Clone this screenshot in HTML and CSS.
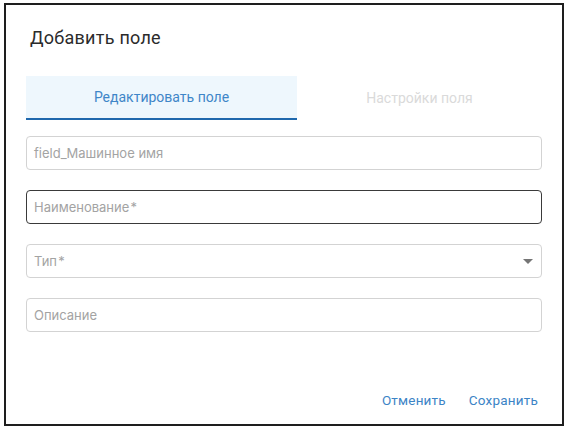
FILE: index.html
```html
<!DOCTYPE html>
<html lang="ru">
<head>
<meta charset="utf-8">
<link rel="stylesheet" href="styles.css">
</head>
<body>
<div class="frame">
  <h1 class="title">Добавить поле</h1>
  <div class="tabs">
    <div class="tab tab-active">Редактировать поле</div>
    <div class="tab tab-disabled">Настройки поля</div>
  </div>
  <div class="fields">
    <div class="field">field_Машинное имя</div>
    <div class="field field-focus">Наименование&#8202;*</div>
    <div class="field field-select"><span>Тип&#8202;*</span>
      <svg class="arrow" width="10" height="5" viewBox="0 0 10 5"><path d="M0 0 L10 0 L5 5 Z" fill="#757575"/></svg>
    </div>
    <div class="field">Описание</div>
  </div>
  <div class="actions">
    <span class="btn">Отменить</span>
    <span class="btn">Сохранить</span>
  </div>
</div>
</body>
</html>
```
FILE: styles.css
```css
html, body {
  margin: 0;
  padding: 0;
  background: #fff;
}
body {
  font-family: Roboto, "Noto Sans", sans-serif;
}
.frame {
  margin: 3px 3px 0 4px;
  width: 556px;
  height: 419px;
  border: 2px solid #1e1e1e;
  box-sizing: content-box;
  display: flex;
  flex-direction: column;
  padding: 0;
}
.title {
  margin: 0;
  padding: 21px 0 0 24px;
  font-size: 18px;
  line-height: 24px;
  font-weight: 400;
  color: #2b2b2b;
  letter-spacing: 0.25px;
}
.tabs {
  display: flex;
  margin: 26px 20px 0 20px;
  height: 44px;
}
.tab {
  display: flex;
  align-items: center;
  justify-content: center;
  font-size: 14px;
  box-sizing: border-box;
}
.tab-active {
  width: 271px;
  background: #eef7fd;
  color: #3f86c8;
  border-bottom: 2px solid #1f68ad;
}
.tab-disabled {
  flex: 1;
  color: #dadada;
}
.fields {
  display: flex;
  flex-direction: column;
  gap: 20px;
  margin: 16px 20px 0 20px;
}
.field {
  height: 34px;
  box-sizing: border-box;
  border: 1px solid #d3d3d3;
  border-radius: 4px;
  padding: 0 7px;
  display: flex;
  align-items: center;
  font-family: Inter, Roboto, sans-serif;
  font-size: 13px;
  color: #a3a3a3;
}
.field-focus {
  border-color: #3a3a3a;
}
.field-select {
  justify-content: space-between;
  padding-right: 8px;
}
.arrow {
  display: block;
}
.actions {
  display: flex;
  justify-content: flex-end;
  gap: 23px;
  margin: 58px 24px 0 0;
}
.btn {
  font-size: 13.5px;
  color: #3c84c6;
  line-height: 20px;
  letter-spacing: 0.2px;
}
```
